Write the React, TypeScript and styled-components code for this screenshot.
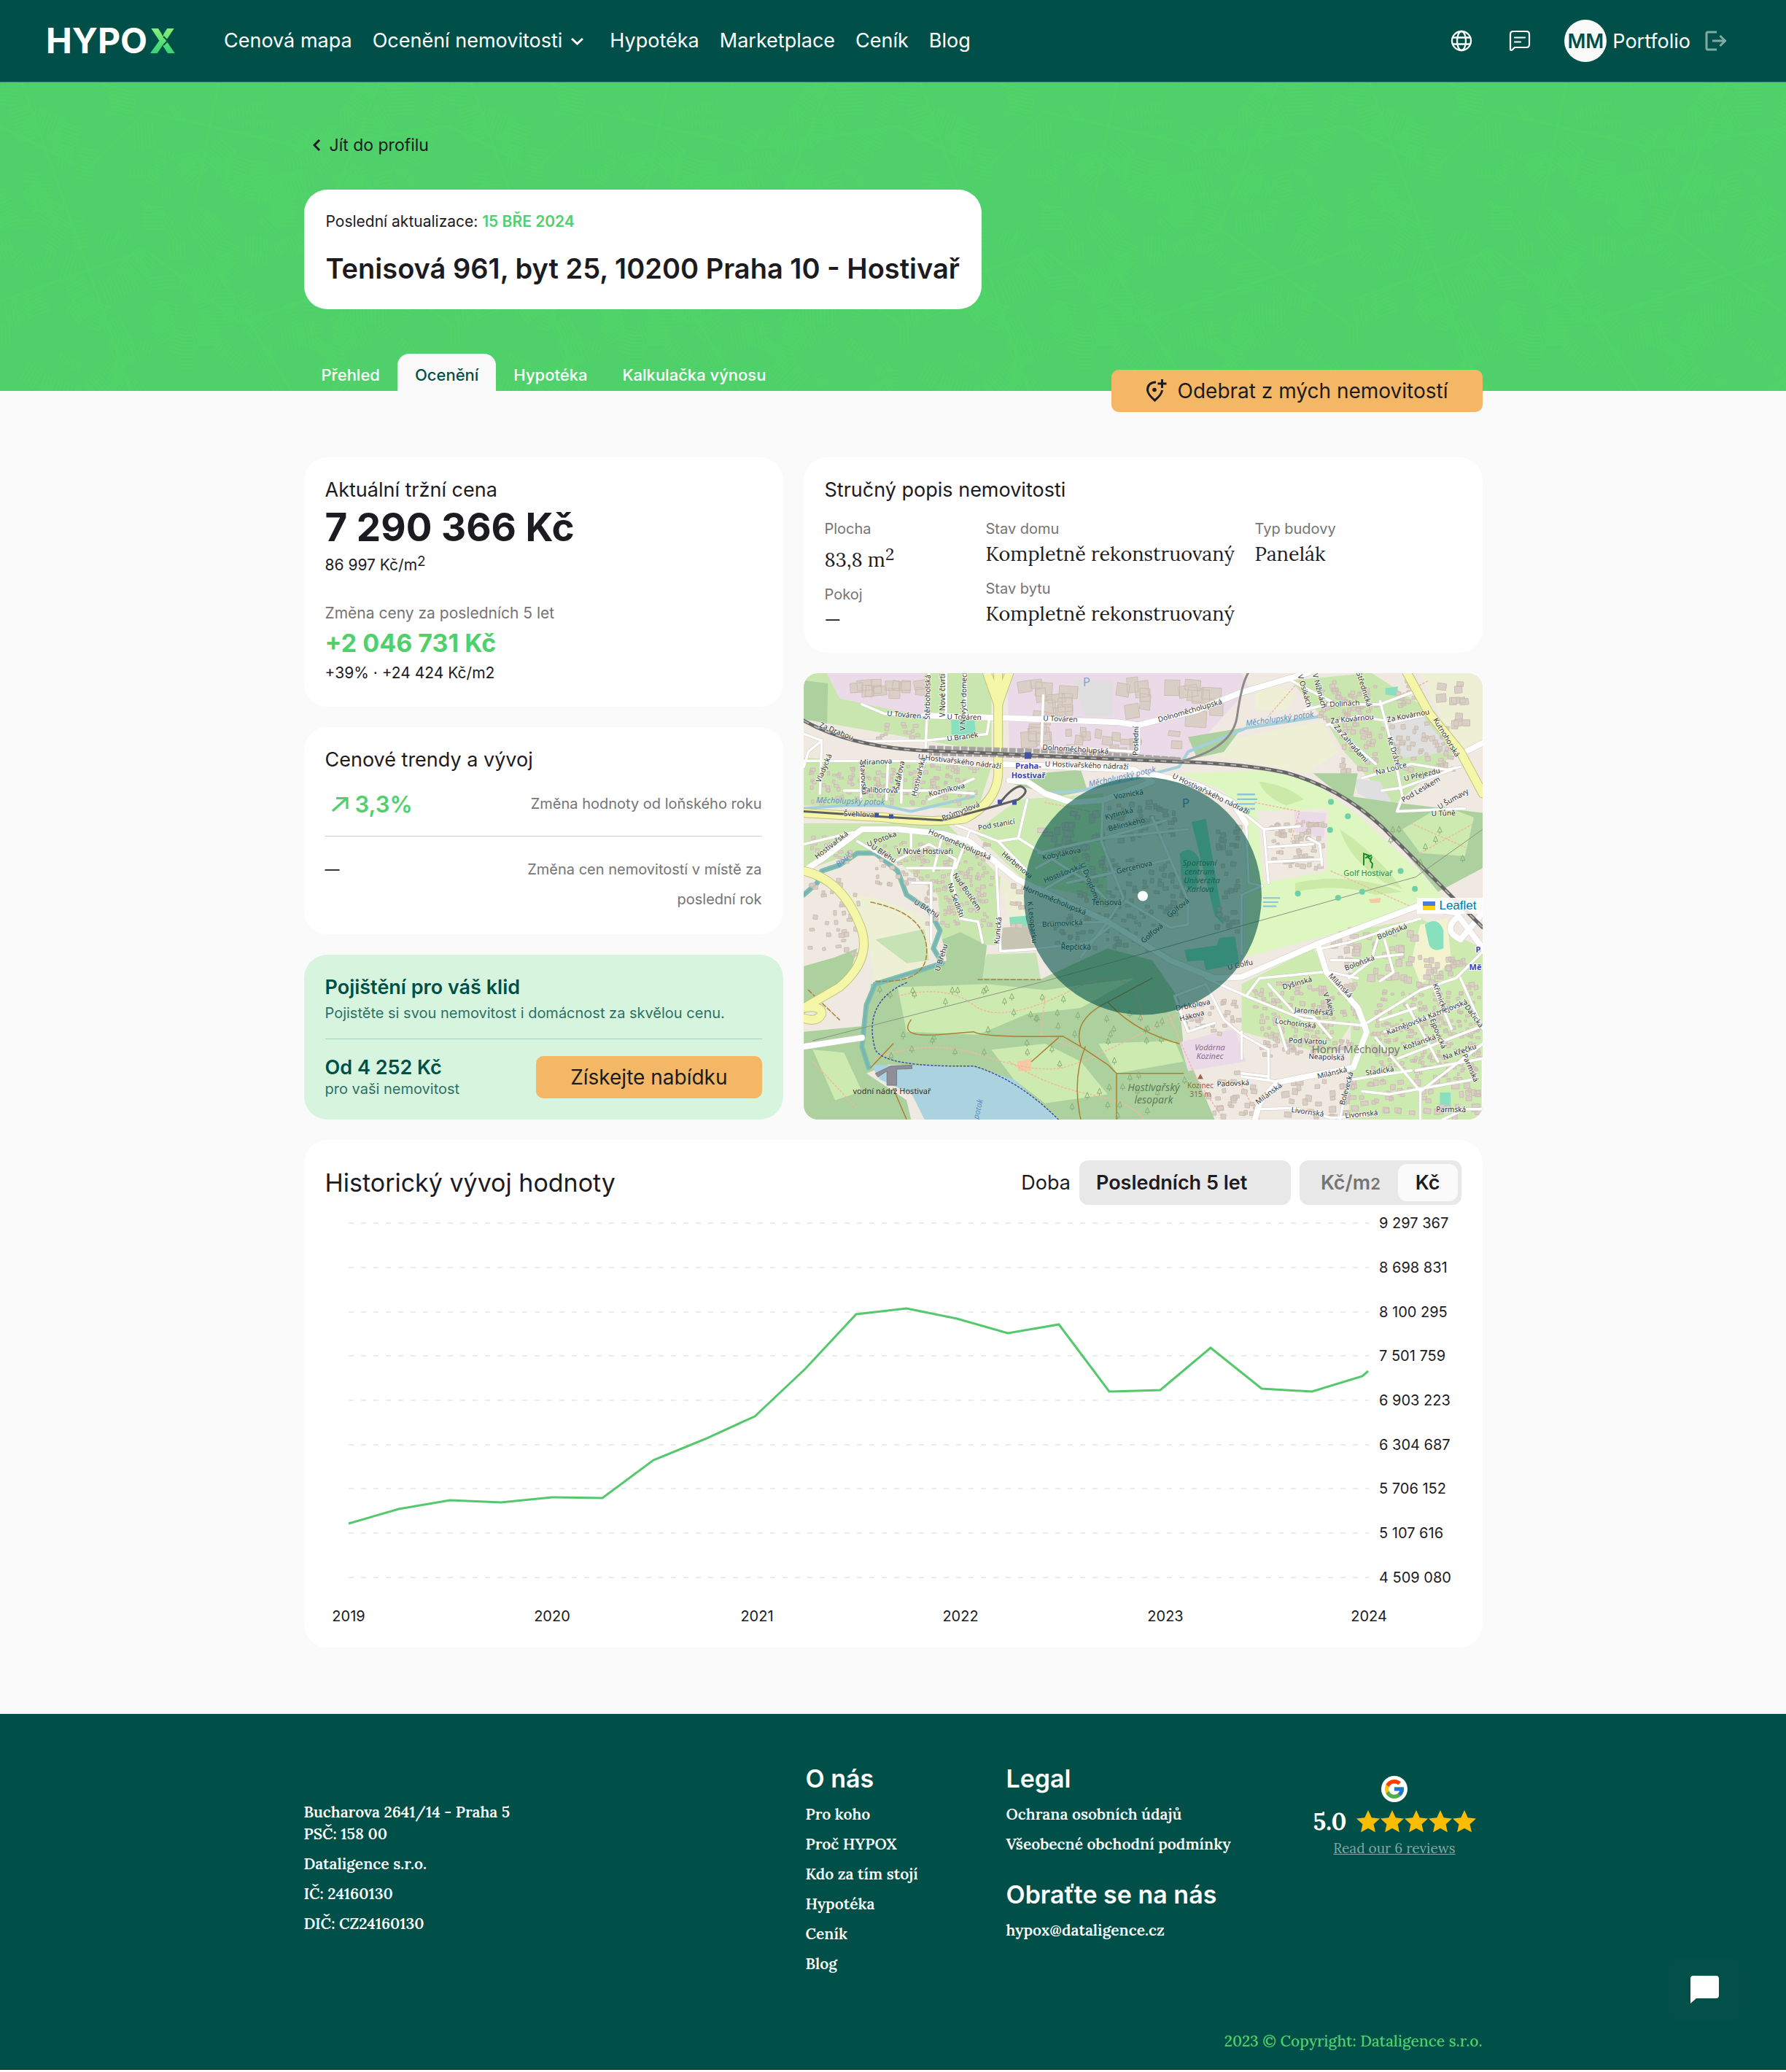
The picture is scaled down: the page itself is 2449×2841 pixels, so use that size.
import React, { useState } from "react";
import styled, { createGlobalStyle } from "styled-components";

const color = {
  pine: "#005049",
  leaf: "#50d06b",
  ink: "#1c1b1f",
  muted: "#757575",
  orange: "#f3b765",
  mint: "#d7f5de",
  page: "#fafafa",
  grey: "#e8e8e8",
};

const sans = `Inter, "Noto Sans", sans-serif`;
const serif = `Lora, "Liberation Serif", "Times New Roman", serif`;

const GlobalStyle = createGlobalStyle`
  *, *::before, *::after { box-sizing: border-box; }
  body { margin: 0; background: ${color.page}; color: ${color.ink}; font-family: ${sans}; font-size: 27px; }
  h1, h2, h3, p, ul, dl, dd { margin: 0; padding: 0; font-weight: 400; }
  ul { list-style: none; }
  a { color: inherit; text-decoration: none; }
  button, select { font: inherit; color: inherit; border: 0; background: none; padding: 0; cursor: pointer; }
  svg { display: block; }
`;

/* ---------- Header ---------- */

const Header = styled.header`
  display: flex;
  align-items: center;
  height: 113px;
  padding: 0 81px 0 62px;
  background: ${color.pine};
  border-bottom: 1px solid #3d8574;
  color: #fff;
`;

const Logo = styled.a`
  display: block;
  margin-right: 59px;
`;

const Nav = styled.nav`
  display: flex;
  gap: 28px;
  flex: 1;
`;

const NavLink = styled.a`
  display: flex;
  align-items: center;
  gap: 12px;
  line-height: 36px;
  white-space: nowrap;
  svg { margin-right: 8px; }
`;

const Tools = styled.div`
  display: flex;
  align-items: center;
`;

const IconButton = styled.button<{ $gap: number }>`
  display: block;
  margin-right: ${(p) => p.$gap}px;
`;

const Profile = styled.a`
  display: flex;
  align-items: center;
  gap: 8px;
  margin-right: 20px;
`;

const Avatar = styled.span`
  display: grid;
  place-items: center;
  width: 58px;
  height: 58px;
  border-radius: 50%;
  background: ${color.page};
  color: ${color.pine};
  font-weight: 600;
`;

/* ---------- Hero ---------- */

const Hero = styled.section`
  position: relative;
  background: ${color.leaf};
`;

const HeroTexture = styled.svg`
  position: absolute;
  inset: 0;
  width: 100%;
  height: 100%;
`;

const Container = styled.div`
  position: relative;
  max-width: 1616px;
  margin: 0 auto;
`;

const HeroInner = styled(Container)`
  padding-top: 70px;
`;

const BackLink = styled.a`
  display: flex;
  width: fit-content;
  align-items: center;
  gap: 12px;
  padding-left: 12px;
  font-size: 23px;
  line-height: 32px;
`;

const AddressCard = styled.div`
  width: fit-content;
  margin-top: 45px;
  padding: 24px 30px 26px;
  border-radius: 32px;
  background: #fff;
`;

const Updated = styled.p`
  font-size: 21px;
  line-height: 40px;
  strong { color: ${color.leaf}; font-weight: 600; }
`;

const Address = styled.h1`
  margin-top: 14px;
  font-size: 38px;
  font-weight: 600;
  line-height: 60px;
`;

const HeroFoot = styled.div`
  display: flex;
  align-items: flex-end;
  justify-content: space-between;
  margin-top: 61px;
`;

const Tabs = styled.nav`
  display: flex;
`;

const Tab = styled.a<{ $active?: boolean }>`
  padding: 11px 24px 0;
  height: 51px;
  border-radius: 16px 16px 0 0;
  background: ${(p) => (p.$active ? color.page : "transparent")};
  color: ${(p) => (p.$active ? color.pine : "#fff")};
  font-size: 22px;
  font-weight: 500;
  line-height: 36px;
`;

const OrangeButton = styled.button`
  display: flex;
  align-items: center;
  justify-content: center;
  gap: 15px;
  height: 58px;
  padding: 0 47px;
  border-radius: 10px;
  background: ${color.orange};
  color: ${color.ink};
  font-size: 28px;
`;

const RemoveButton = styled(OrangeButton)`
  margin-bottom: -29px;
`;

/* ---------- Cards ---------- */

const Main = styled.main`
  max-width: 1616px;
  margin: 0 auto;
  padding: 91px 0;
  display: grid;
  grid-template-columns: 657fr 931fr;
  gap: 28px;
`;

const Column = styled.div`
  display: flex;
  flex-direction: column;
  gap: 28px;
  min-width: 0;
`;

const Card = styled.section<{ $mint?: boolean }>`
  padding: 27px 29px;
  border-radius: 32px;
  background: ${(p) => (p.$mint ? color.mint : "#fff")};
  color: ${(p) => (p.$mint ? color.pine : color.ink)};
`;

const CardTitle = styled.h2<{ $bold?: boolean }>`
  font-size: 27px;
  font-weight: ${(p) => (p.$bold ? 600 : 400)};
  line-height: 36px;
`;

const Price = styled.p`
  font-size: 53px;
  font-weight: 700;
  line-height: 66px;
`;

const PriceNote = styled.p<{ $muted?: boolean }>`
  font-size: 21px;
  line-height: 38px;
  color: ${(p) => (p.$muted ? color.muted : "inherit")};
  sup { font-size: 19px; line-height: 0; vertical-align: 6px; }
`;

const Change = styled.div`
  margin-top: 28px;
`;

const ChangeValue = styled.p`
  font-size: 34px;
  font-weight: 700;
  line-height: 44px;
  color: ${color.leaf};
`;

const TrendRow = styled.div`
  display: flex;
  justify-content: space-between;
  padding: 22px 0 23px;
  line-height: 41px;
  & + & { border-top: 1px solid #c6d0cf; padding: 25px 0 0; }
`;

const TrendValue = styled.span<{ $up?: boolean }>`
  display: flex;
  align-items: center;
  gap: 8px;
  height: 41px;
  padding-left: ${(p) => (p.$up ? 8 : 0)}px;
  color: ${(p) => (p.$up ? color.leaf : color.ink)};
  font-size: ${(p) => (p.$up ? 31 : 20)}px;
  font-weight: ${(p) => (p.$up ? 600 : 400)};
`;

const TrendLabel = styled.span`
  max-width: 345px;
  color: ${color.muted};
  font-size: 20px;
  text-align: right;
`;

const OfferText = styled.p`
  font-size: 20px;
  line-height: 34px;
  opacity: 0.8;
`;

const Offer = styled.div`
  display: flex;
  justify-content: space-between;
  align-items: center;
  margin-top: 18px;
  padding: 23px 0 2px;
  border-top: 1px solid #a9cfc0;
`;

const OfferPrice = styled.p`
  font-weight: 600;
  line-height: 32px;
`;

const OfferNote = styled.p`
  font-size: 20px;
  line-height: 26px;
  opacity: 0.8;
`;

const Facts = styled.dl`
  display: grid;
  grid-template-columns: 198px 346px auto;
  justify-content: start;
  column-gap: 23px;
  margin-top: 20px;
`;

const FactColumn = styled.div`
  display: flex;
  flex-direction: column;
  gap: 14px;
`;

const FactName = styled.dt`
  color: ${color.muted};
  font-size: 20px;
  line-height: 30px;
`;

const FactValue = styled.dd<{ $raised?: boolean }>`
  padding-top: ${(p) => (p.$raised ? 8 : 0)}px;
  font-family: ${serif};
  font-size: 27px;
  line-height: 38px;
  white-space: nowrap;
  sup { font-size: 23px; line-height: 0; vertical-align: 9px; }
`;

const MapFrame = styled.div`
  position: relative;
  flex: 1;
  min-height: 560px;
  border-radius: 20px;
  overflow: hidden;
`;

const MapSvg = styled.svg`
  position: absolute;
  inset: 0;
  width: 100%;
  height: 100%;
`;

const Attribution = styled.a`
  position: absolute;
  right: 0;
  top: 308px;
  display: flex;
  align-items: center;
  gap: 5px;
  height: 22px;
  padding: 0 8px;
  background: rgba(255, 255, 255, 0.85);
  color: #0078a8;
  font-family: "Liberation Sans", Arial, sans-serif;
  font-size: 17px;
`;

/* ---------- Chart ---------- */

const ChartCard = styled(Card)`
  grid-column: 1 / -1;
  padding: 28px 29px;
`;

const ChartHead = styled.div`
  display: flex;
  align-items: center;
  gap: 12px;
`;

const ChartTitle = styled.h2`
  flex: 1;
  font-size: 34px;
`;

const Period = styled.select`
  appearance: none;
  width: 290px;
  height: 61px;
  padding: 0 23px;
  border-radius: 12px;
  background: ${color.grey};
  font-weight: 600;
`;

const Toggle = styled.div`
  display: flex;
  padding: 5px;
  border-radius: 12px;
  background: ${color.grey};
`;

const ToggleButton = styled.button<{ $active: boolean }>`
  height: 51px;
  padding: 0 24px;
  border-radius: 12px;
  background: ${(p) => (p.$active ? color.page : "transparent")};
  color: ${(p) => (p.$active ? color.ink : color.muted)};
  font-weight: 600;
  small { font-size: 22px; }
`;

const ChartSvg = styled.svg`
  width: 100%;
  height: auto;
  font-family: ${sans};
  font-size: 20px;
`;

/* ---------- Footer ---------- */

const Footer = styled.footer`
  padding: 67px 0 23px;
  border-bottom: 1px solid #10201e;
  background: ${color.pine};
  color: #fff;
  font-family: ${serif};
`;

const FooterGrid = styled(Container)`
  display: grid;
  grid-template-columns: 688fr 275fr 412fr 241fr;
`;

const FooterAddress = styled.address`
  padding-top: 53px;
  font-style: normal;
  font-size: 21px;
  font-weight: 600;
  line-height: 30px;
`;

const CompanyLine = styled.p`
  font-weight: 600;
  line-height: 41px;
  &:first-of-type { margin-top: 5px; }
`;

const FooterTitle = styled.h3<{ $spaced?: boolean }>`
  margin: ${(p) => (p.$spaced ? 27 : 0)}px 0 6px;
  font-family: ${sans};
  font-size: 34px;
  font-weight: 600;
  line-height: 44px;
`;

const FooterLink = styled.a`
  display: block;
  font-size: 21px;
  font-weight: 600;
  line-height: 41px;
  white-space: nowrap;
`;

const Reviews = styled.div`
  display: flex;
  flex-direction: column;
  align-items: center;
  padding-top: 18px;
`;

const Rating = styled.div`
  display: flex;
  align-items: center;
  gap: 13px;
  height: 44px;
  margin-top: 4px;
  font-size: 33px;
  font-weight: 700;
`;

const Stars = styled.span`
  display: flex;
  gap: 1px;
`;

const ReviewLink = styled.a`
  color: #80a8a4;
  font-size: 19px;
  line-height: 30px;
  text-decoration: underline;
`;

const Copyright = styled(Container)`
  margin-top: 71px;
  color: ${color.leaf};
  font-size: 21px;
  font-weight: 500;
  line-height: 30px;
  text-align: right;
`;

const ChatButton = styled.button`
  position: fixed;
  right: 64px;
  bottom: 68px;
  display: grid;
  place-items: center;
  width: 96px;
  height: 90px;
  border-radius: 16px;
  background: #03504a;
`;

/* ---------- Icons ---------- */

const LogoMark = () => (
  <svg width="186" height="60" viewBox="0 0 186 60" role="img" aria-label="HYPOX">
    <defs>
      <linearGradient id="logoX" x1="0" y1="0" x2="0" y2="1">
        <stop offset="0.200" stopColor="#8cee75" />
        <stop offset="0.800" stopColor="#38d477" />
      </linearGradient>
    </defs>
    <text x="1" y="47" fontFamily="Inter, sans-serif" fontSize="48" fontWeight="700" fill="#fff">HYPO</text>
    <text x="143" y="47" fontFamily="Inter, sans-serif" fontSize="47" fontWeight="800" fill="url(#logoX)">X</text>
    <path d="M162 24L168 30L162 36" fill="none" stroke={color.pine} strokeWidth="2" />
  </svg>
);

const Chevron = ({ left }: { left?: boolean }) => (
  <svg width={left ? 11 : 17} height={left ? 16 : 11} viewBox={left ? "0 0 11 16" : "0 0 17 11"} fill="none" stroke="currentColor" strokeWidth="3">
    <path d={left ? "M9 1 L2 8 L9 15" : "M1 2 L8.500 9 L16 2"} />
  </svg>
);

const GlobeIcon = () => (
  <svg width="30" height="30" viewBox="0 0 30 30" fill="none" stroke="#fff" strokeWidth="2.300">
    <circle cx="15" cy="15" r="13" />
    <ellipse cx="15" cy="15" rx="6" ry="13" />
    <path d="M3 10.500H27M3 19.500H27" />
  </svg>
);

const MessageIcon = () => (
  <svg width="30" height="30" viewBox="0 0 30 30" fill="none" stroke="#fff" strokeWidth="2.200" strokeLinejoin="round" strokeLinecap="round">
    <path d="M2 27V6Q2 2 6 2H24Q28 2 28 6V20Q28 24 24 24H8L5 27Q2.500 29 2 27Z" />
    <path d="M8 10.500H22M8 16.500H16" />
  </svg>
);

const LogoutIcon = () => (
  <svg width="30" height="28" viewBox="0 0 30 28" fill="none" stroke="#84aaa5" strokeWidth="3">
    <path d="M16 2H4Q2 2 2 4V24Q2 26 4 26H16" />
    <path d="M10 14H27M20.500 7L27.500 14L20.500 21" />
  </svg>
);

const PinPlusIcon = () => (
  <svg width="29" height="32" viewBox="0 0 29 32" fill="none" stroke={color.ink} strokeWidth="3">
    <path d="M14 4Q2.500 4.500 2.500 15Q3 21 12.500 29Q22 21 22.500 15" />
    <path d="M22.500 0V12M16.500 6H28.500" />
    <circle cx="12" cy="14.500" r="2.800" fill={color.ink} stroke="none" />
  </svg>
);

const ArrowUpRight = () => (
  <svg width="25" height="22" viewBox="0 0 25 22" fill="none" stroke="currentColor" strokeWidth="3.200">
    <path d="M2 20L21 3M7 2.500H22V17" />
  </svg>
);

const Star = () => (
  <svg width="32" height="31" viewBox="0 0 32 31" fill="#fbbc04">
    <path d="M16 0L20.700 10.300L32 11.600L23.600 19.200L25.900 30.300L16 24.700L6.100 30.300L8.400 19.200L0 11.600L11.300 10.300Z" />
  </svg>
);

const GoogleBadge = () => (
  <svg width="36" height="36" viewBox="0 0 36 36" role="img" aria-label="Google">
    <circle cx="18" cy="18" r="18" fill="#fff" />
    <g transform="translate(2.400 2.400) scale(.65)">
      <path fill="#FFC107" d="M43.600 20.100H42V20H24v8h11.300C33.700 32.700 29.200 36 24 36c-6.600 0-12-5.400-12-12s5.400-12 12-12c3.100 0 5.800 1.200 8 3l5.700-5.700C34 6.100 29.300 4 24 4 13 4 4 13 4 24s9 20 20 20 20-9 20-20c0-1.300-.1-2.700-.4-3.900z" />
      <path fill="#FF3D00" d="M6.300 14.700l6.600 4.800C14.700 15.100 19 12 24 12c3.100 0 5.800 1.200 8 3l5.700-5.700C34 6.100 29.300 4 24 4 16.300 4 9.700 8.300 6.300 14.700z" />
      <path fill="#4CAF50" d="M24 44c5.200 0 9.900-2 13.400-5.200l-6.200-5.200A12 12 0 0 1 24 36c-5.200 0-9.600-3.300-11.300-7.900l-6.500 5C9.500 39.600 16.200 44 24 44z" />
      <path fill="#1976D2" d="M43.600 20.100H42V20H24v8h11.300a12 12 0 0 1-4.100 5.600l6.200 5.200C37 39.200 44 34 44 24c0-1.300-.1-2.700-.4-3.900z" />
    </g>
  </svg>
);

/* ---------- Hero street texture ---------- */

const makeRandom = (seed: number) => () => {
  seed = (seed * 16807) % 2147483647;
  return seed / 2147483647;
};

const hatch = (() => {
  const rnd = makeRandom(11);
  let d = "";
  for (let i = 0; i < 170; i++) {
    const x = rnd() * 616;
    const y = rnd() * 423;
    const a = rnd() * Math.PI;
    const length = 8 + rnd() * 30;
    const count = 3 + Math.floor(rnd() * 9);
    for (let k = 0; k < count; k++) {
      const sx = x + Math.cos(a + 1.57) * k * 5;
      const sy = y + Math.sin(a + 1.57) * k * 5;
      d += `M${sx.toFixed(0)} ${sy.toFixed(0)}l${(Math.cos(a) * length).toFixed(0)} ${(Math.sin(a) * length).toFixed(0)}`;
    }
  }
  return d;
})();

const Texture = () => (
  <HeroTexture aria-hidden="true">
    <defs>
      <pattern id="streets" width="616" height="423" patternUnits="userSpaceOnUse">
        <g fill="none" stroke="#50d765" opacity="0.5">
          <path d={hatch} strokeWidth="2" />
          <path d="M0 60L120 120L200 40L420 90L616 60M30 0L180 423M300 0L260 200L400 423M520 0L440 200L616 330M0 300L200 230L330 330L616 230" strokeWidth="3" />
        </g>
      </pattern>
    </defs>
    <rect width="100%" height="100%" fill="url(#streets)" />
  </HeroTexture>
);

/* ---------- Map ---------- */

/* Survey grid to map pixels. */
const SX = 0.6125;
const SY = 0.4082;
const toMap = (x: number, y: number) => [x * SX - 12, y * SY - 14];

type Label = [string, number, number, number, number];

const streetLabels: Label[] = [
  ["U Továren", 212, 172, 276, 180], ["U Továren", 344, 183, 414, 185], ["U Továren", 558, 188, 630, 192],
  ["Dolnoměcholupská", 822, 190, 950, 134], ["Dolnoměcholupská", 568, 286, 688, 298], ["Poslední", 768, 294, 769, 218],
  ["V Dolinách", 1190, 142, 1258, 136], ["Za Kovárnou", 1208, 196, 1288, 184], ["Za Kovárnou", 1336, 190, 1412, 168],
  ["Kutnohorská", 1428, 184, 1480, 312], ["Ke Dráze", 1328, 256, 1344, 332], ["Za Zahradami", 1212, 220, 1270, 320],
  ["Na Louce", 1308, 368, 1364, 346], ["U Přejezdu", 1374, 388, 1436, 366], ["Pod Lesíkem", 1370, 456, 1438, 396],
  ["U Šumavy", 1450, 480, 1502, 436], ["U Tůně", 1430, 508, 1474, 506], ["V Osikách", 1128, 50, 1144, 130],
  ["V Nížinách", 1162, 50, 1176, 130], ["Střednická", 1262, 52, 1276, 118], ["Štěrboholská", 302, 158, 303, 60], ["V Nové čtvrti", 337, 150, 337, 56],
  ["V Nových domech", 382, 168, 384, 70], ["U Branek", 348, 256, 404, 244], ["Za Drahou", 60, 212, 122, 250],
  ["U Hostivařského nádraží", 294, 320, 442, 346], ["U Hostivařského nádraží", 578, 342, 728, 350],
  ["U Hostivařského nádraží", 862, 392, 994, 488], ["Miranova", 154, 336, 210, 332], ["Daliborova", 156, 428, 222, 430],
  ["Kozmíkova", 308, 440, 374, 416], ["Vladycká", 60, 386, 80, 314], ["Stavovská", 146, 336, 150, 426],
  ["Šafářova", 234, 412, 244, 336], ["Hostivařská", 274, 430, 290, 326], ["Průmyslová", 332, 524, 414, 476],
  ["Švehlova", 108, 508, 178, 512], ["Pod stanicí", 418, 554, 486, 536], ["U Potoka", 170, 608, 222, 578],
  ["Hornoměcholupská", 304, 570, 430, 652], ["Hornoměcholupská", 514, 758, 644, 838], ["Hostivařská", 56, 646, 114, 578],
  ["V Nové Hostivaři", 242, 636, 340, 636], ["U Břehu", 174, 620, 218, 662], ["U Břehu", 270, 806, 314, 846],
  ["U Břehu", 326, 1020, 340, 952], ["Herbenova", 468, 646, 520, 712], ["Kobylákova", 562, 654, 634, 632],
  ["Hostišovská", 568, 728, 636, 688], ["U Dvojdomů", 642, 682, 670, 788], ["Gercenova", 728, 700, 794, 676],
  ["Voznická", 720, 450, 776, 436], ["Kytinská", 702, 518, 752, 498], ["Bělinského", 712, 556, 776, 532],
  ["Tenisová", 670, 806, 726, 806], ["Golfová", 842, 846, 880, 800], ["Golfová", 784, 932, 822, 884],
  ["Brumovická", 562, 880, 636, 874], ["Řepčická", 602, 956, 656, 956], ["U Golfu", 974, 1024, 1022, 1008],
  ["K Lesoparku", 522, 812, 530, 920], ["Kunická", 458, 926, 462, 860], ["Na Sedlišti", 344, 748, 366, 838],
  ["Nad Botičem", 360, 722, 402, 812], ["Drbkolova", 862, 1160, 922, 1142], ["Hákova", 868, 1196, 912, 1178],
  ["Dyšinská", 1100, 1088, 1152, 1066], ["V Aleji", 1184, 1112, 1196, 1162], ["Jaroměřská", 1126, 1168, 1196, 1178],
  ["Lochotínská", 1084, 1206, 1156, 1220], ["Pod Vartou", 1114, 1270, 1182, 1274], ["Neapolská", 1158, 1324, 1222, 1328],
  ["Milánská", 1196, 1050, 1238, 1116], ["Milánská", 1174, 1390, 1234, 1368], ["Milánská", 1040, 1474, 1088, 1420],
  ["Stadická", 1284, 1378, 1336, 1366], ["Kaznějovská", 1336, 1238, 1406, 1198], ["Kaznějovská", 1428, 1184, 1498, 1144],
  ["Kožlanská", 1370, 1292, 1430, 1260], ["Ejpovická", 1424, 1202, 1446, 1282], ["Křimická", 1430, 1084, 1448, 1156],
  ["Dačická", 1502, 1156, 1530, 1214], ["Na Křečku", 1460, 1324, 1520, 1292], ["Parmská", 1496, 1320, 1518, 1394],
  ["Parmská", 1442, 1504, 1496, 1504], ["Boloňská", 1312, 920, 1366, 888], ["Boloňská", 1240, 1024, 1292, 994],
  ["Bolevecká", 1232, 1468, 1248, 1382], ["Padovská", 952, 1416, 1010, 1412], ["Livornská", 1118, 1504, 1176, 1516],
  ["Livornská", 1240, 1522, 1298, 1514],
];

const waterLabels: Label[] = [
  ["Měcholupský potok", 1018, 204, 1154, 176], ["Měcholupský potok", 666, 408, 802, 362],
  ["Měcholupský potok", 56, 464, 192, 470], ["Botič", 98, 680, 128, 642], ["potok", 412, 1520, 420, 1470],
];

const Labels = ({ items, ...style }: { items: Label[] } & React.SVGProps<SVGGElement>) => (
  <g {...style}>
    {items.map(([text, x1, y1, x2, y2], i) => {
      const [ax, ay] = toMap(x1, y1);
      const [bx, by] = toMap(x2, y2);
      const angle = (Math.atan2(by - ay, bx - ax) * 180) / Math.PI;
      return (
        <text key={i} transform={`translate(${(ax + bx) / 2} ${(ay + by) / 2 + 3}) rotate(${angle})`}>
          {text}
        </text>
      );
    })}
  </g>
);

const shapes: [string, string][] = [
  ["#c9e6ae", "M20 34H440V300L20 190Z"],
  ["#add19e", "M20 60L74 70L72 205L20 190Z"],
  ["#ebdbe8", "M70 34H290V178L160 140L100 120Z M475 34H1000L1018 90L990 130L870 330L480 292Z"],
  ["#e0dfdf", "M620 60H712V180H650Z"],
  ["#c9e6ae", "M20 320L440 350L410 490L20 480Z M20 540H340L460 720L450 950L330 940L320 780L240 680L150 630L20 700Z"],
  ["#eef0d5", "M1030 60L1120 100L1100 160L1030 160Z M960 262L1180 196L1215 300L1150 372L940 316Z M1400 34H1540V260L1480 300Z"],
  ["#add19e", "M880 250L1000 220L960 300L900 320Z M560 370L640 360L655 430L590 450L470 400Z"],
  ["#c9e6ae", "M1110 60L1290 34L1420 160L1480 300L1340 480L1230 300L1190 200Z"],
  ["#e0dfdf", "M1310 190L1400 170L1470 300L1360 320Z M1250 390L1310 400L1350 510L1260 440Z"],
  ["#add19e", "M1160 372L1260 372L1250 450L1340 470L1540 505L1540 690L1440 770L1340 590Z"],
  ["#cdebb0", "M1360 560L1450 480L1520 520L1500 650L1400 640Z"],
  ["#def6c0", "M860 372L1060 362L1160 402L1260 512L1390 690L1450 790L1390 830L1170 925L1010 990L1010 560L960 430Z"],
  ["#efe9e1", "M1035 500L1195 490L1190 700L1050 740Z"],
  ["#cdebb0", "M500 460L690 440L700 800L520 740L400 570Z M1000 1080L1160 960L1260 1180L1200 1320L1000 1240Z M1250 900L1400 860L1540 960V1535H1240Z"],
  ["#eef0d5", "M80 760L200 800L290 850L310 960L290 1020L180 1090L160 900Z M460 720L510 760L520 860L480 870Z"],
  ["#c5e3b4", "M180 930L290 895L300 1000L250 1010Z M430 980L540 975L550 1062L410 1062Z"],
  ["#add19e", "M20 1020L90 990L140 960L120 1060L20 1180Z M20 1240L160 1220L170 1080L250 1060L340 1000L330 930L370 905L430 950L420 1060L550 1064L700 960L800 1000L860 1130L870 1290L940 1535H590L500 1430L410 1370L210 1350L160 1380L250 1470L260 1535H20Z"],
  ["#cdebb0", "M230 1090L430 1080L560 1100L760 1060L640 1160L520 1180L410 1250L250 1240Z M440 1300L560 1280L640 1340L700 1450L560 1480L490 1400Z M40 1300L110 1310L150 1440L90 1470Z M680 1280L850 1270L870 1340L720 1380Z"],
  ["#aad3df", "M200 1352L400 1358L490 1400L590 1535H290L262 1450L190 1400L170 1350Z"],
  ["#ebdbe8", "M862 1275L985 1228L1010 1340L880 1372Z M1118 500L1190 505L1184 590L1120 570Z"],
  ["#c8c4b3", "M465 890L530 885L540 960L460 970Z"],
  ["#f3f4cf", "M1400 880L1460 860L1470 1010L1400 1080L1380 1000Z"],
  ["#f5c9a1", "M498 1340L530 1330L528 1372L500 1372Z M1285 795L1312 790L1310 806L1288 808Z"],
  ["#88e0be", "M350 192L402 190L405 242L350 242Z M480 855L520 850L520 886L482 886Z M1410 880Q1440 850 1452 900V960Q1430 975 1420 950Z M888 535L920 525L960 880L940 850Z M862 640Q890 610 905 660L900 760Q870 770 865 720Z M872 965L945 950L950 925L985 920L995 1012L920 1034L915 1000L878 1004Z M1322 86L1350 80L1348 112L1322 108Z M1444 1444H1468V1490H1444Z"],
];

const creek = "M20 780L50 740L60 700L100 680L140 640L180 640L230 700L250 780L300 830L325 900L310 960L330 1010L180 1080L160 1150L150 1290L165 1360";
const brook = "M20 490L110 480L200 480L260 500L400 450M560 440L640 430L760 390L860 350L880 300L1010 220L1180 180";

const minorRoads = [
  "M150 140L200 172L292 178M300 34L292 300M338 34V176M382 34V178M130 265L292 262L430 240L436 180M556 110L552 280L770 300V215",
  "M20 240L60 262L30 300L20 350M60 260L56 440M148 340V460M208 340L205 460M240 340L238 470M290 330L270 440M20 330H290L440 350M110 430H300L400 440M300 460L400 390",
  "M520 460L500 590L455 600M500 590L660 740M660 740L700 800M360 545L455 600L520 700M545 640L630 610L690 590L880 560M690 590L830 530M610 740L700 710L840 660M540 690L600 640M560 760L640 690L660 740M800 520L880 800L880 880L840 890L740 800",
  "M690 460L686 600L735 790L700 870M545 880L700 870L640 990M545 960L660 940L710 880M20 610L130 570M140 600L220 670L300 610L360 660L350 720L370 860L410 870L420 940M260 560V640M330 580L310 700M250 690L350 690M262 740H305V940M390 570L360 690",
  "M450 660L460 970L540 962M1000 500L1050 560L1060 740M1050 560L1130 550M1060 620L1160 610M1060 670L1180 660M1150 590L1175 610L1180 680M1010 540L1016 740L1046 750L1000 780L1000 980",
  "M920 1080L960 1200L1000 1250L1060 1300V1400M920 1080L850 1120L880 1240L940 1210M920 1060L1010 1120L1140 1200L1280 1220M1000 1240V1330M1010 1120L1040 1060L1180 1040M1060 1080L1120 1180L1160 1190L1200 1260M1080 1200L1100 1300",
  "M1140 160L1190 140L1310 140L1400 90M1310 130L1340 300L1360 450L1348 500L1500 490M1190 210L1260 180L1340 200L1430 170M1200 210L1300 340M1270 388L1380 340L1460 360L1490 350M1314 430L1360 420L1470 360M1110 60L1200 130",
  "M1200 1000L1290 1000L1310 900L1400 860M1240 1060L1300 990L1360 980M1180 960L1240 940L1320 900M1200 1040L1260 1060M1320 930L1340 1040L1310 1070M1270 1220L1400 1100L1480 1060L1540 970M1300 1260L1400 1440L1540 1280M1320 1240L1500 1150M1370 1150L1440 1340M1430 1090L1470 1230M1490 1060L1540 1230M1350 1330L1540 1220M1390 1370L1540 1330L1540 1500M1250 1400L1380 1370M1270 1440L1330 1450L1520 1400M1400 1430V1535M1450 1535L1500 1500H1540M1240 1390L1220 1535M1040 1500L1120 1496L1200 1530L1300 1520M1090 1410L1000 1390M1390 1160L1310 1200M1000 1380L1060 1390",
];

const mainRoads = [
  "M290 178L480 186L720 200L770 210L900 160L1000 100L1150 34",
  "M480 396L520 400L560 440L620 470L690 462M690 462L800 400L760 360L440 340M800 375L900 410L980 470L1010 540",
  "M20 700L60 660L150 560L230 560L330 575L390 600L500 730L700 870L840 1000L940 1060L1000 1056L1170 945L1390 820L1480 840L1540 960",
  "M1170 945L1190 1040L1260 1160L1280 1240L1250 1360L1080 1410L1040 1480L1030 1535",
  "M1500 300L1540 270",
  "M20 1290L150 1260M1480 860Q1450 900 1490 930L1540 840",
];

const yellowRoads = [
  "M455 34V380Q450 470 380 525Q300 540 200 520L20 505",
  "M1370 34L1420 170L1490 300L1540 440",
  "M20 700Q110 730 150 900Q170 1000 100 1090L20 1160",
  "M20 1160Q60 1150 60 1180Q50 1210 20 1195",
  "M430 34L455 140L480 34",
];

const trails = "M170 1360L220 1280M260 1200Q230 1260 320 1250L400 1240Q420 1260 600 1255L640 1290L700 1350L720 1380H870M640 1290Q620 1200 700 1140L800 1060M700 1140Q760 1240 860 1280M530 1340L590 1260M650 1290Q620 1400 640 1535M720 1380V1535M220 1430L250 1535";
const paths = "M180 1330Q300 1260 420 1320T600 1360T860 1180M230 1120Q340 1080 400 1150T620 1100T780 1240M560 1120L550 1250L640 1300M40 1340L140 1500M480 1340Q560 1420 660 1450T780 1535M830 1160L900 1400L960 1535M1030 470L1130 500L1110 600M1200 700L1380 820M1000 1420L1040 1535M560 470L660 500M1130 60L1060 180M1340 120L1420 60M1380 540L1500 620M1400 640L1520 540";

const buildings = (() => {
  const rnd = makeRandom(5);
  const zones: [number, number, number, number, number, number][] = [
    [110, 50, 280, 90, 14, 24], [490, 50, 600, 170, 14, 30], [720, 50, 930, 170, 14, 34], [490, 200, 540, 260, 5, 36],
    [600, 210, 860, 290, 18, 18], [180, 190, 280, 255, 14, 8], [30, 340, 410, 470, 130, 7], [30, 580, 120, 670, 22, 7],
    [170, 600, 440, 740, 110, 7], [290, 740, 440, 880, 60, 7], [30, 720, 140, 980, 34, 9], [540, 480, 680, 620, 22, 16],
    [600, 640, 870, 850, 90, 9], [700, 460, 850, 600, 44, 10], [560, 840, 800, 960, 54, 8], [1060, 530, 1180, 690, 60, 9],
    [1170, 60, 1300, 190, 60, 8], [1220, 200, 1480, 360, 90, 9], [1340, 40, 1400, 140, 16, 8], [1430, 60, 1520, 220, 12, 16],
    [1020, 1070, 1260, 1320, 150, 8], [1290, 1090, 1530, 1400, 240, 7], [1200, 890, 1380, 1060, 40, 13],
    [1380, 980, 1530, 1090, 30, 11], [1080, 1400, 1530, 1520, 84, 12], [870, 1130, 990, 1240, 30, 8], [920, 1370, 1040, 1520, 26, 10],
    [940, 500, 990, 900, 34, 10], [480, 740, 520, 880, 8, 11],
  ];
  let d = "";
  zones.forEach(([x1, y1, x2, y2, n, size]) => {
    for (let i = 0; i < n; i++) {
      const w = size * (0.6 + rnd() * 0.8);
      const h = size * (0.9 + rnd() * 0.9);
      const skew = (rnd() - 0.5) * size * 0.5;
      d += `M${(x1 + rnd() * (x2 - x1)).toFixed(0)} ${(y1 + rnd() * (y2 - y1)).toFixed(0)}l${w.toFixed(0)} ${skew.toFixed(0)}l${(-skew / 2).toFixed(0)} ${h.toFixed(0)}l${(-w).toFixed(0)} ${(-skew).toFixed(0)}Z`;
    }
  });
  return d;
})();

const trees = (() => {
  const rnd = makeRandom(23);
  const out: [number, number][] = [];
  for (let i = 0; i < 46; i++) out.push([190 + rnd() * 640, 1080 + rnd() * 260]);
  for (let i = 0; i < 14; i++) out.push([600 + rnd() * 280, 1360 + rnd() * 150]);
  for (let i = 0; i < 8; i++) out.push([1320 + rnd() * 200, 500 + rnd() * 160]);
  return out;
})();

const rail = "M20 195Q120 280 280 295Q450 305 620 318L860 333Q1010 340 1100 370Q1240 430 1340 590L1480 800L1540 890";

const AreaMap = () => (
  <MapSvg viewBox="0 0 931 613" preserveAspectRatio="xMidYMid slice" role="img" aria-label="Praha-Hostivař">
    <rect width="931" height="613" fill="#efe9e1" />
    <g transform={`translate(-12 -14) scale(${SX} ${SY})`} strokeLinejoin="round" strokeLinecap="round">
      {shapes.map(([fill, d], i) => <path key={i} d={d} fill={fill} />)}
      <g fill="#cbeaa8">
        <path d="M1040 400Q1100 410 1140 460L1100 480Q1050 450 1040 400ZM1220 560Q1300 640 1360 760L1320 740Q1240 660 1220 560ZM1120 740Q1240 700 1360 770L1300 780Q1220 740 1120 770Z" />
      </g>
      <g fill="none">
        <path d={creek} stroke="#7fc0a9" strokeWidth="7" vectorEffect="non-scaling-stroke" />
        <path d={creek} stroke="#79b3ba" strokeWidth="3" vectorEffect="non-scaling-stroke" />
        <path d={brook} stroke="#a4d0dc" strokeWidth="4" vectorEffect="non-scaling-stroke" />
        <path d={paths} stroke="#f3b5a5" strokeWidth="1.500" strokeDasharray="2 3" vectorEffect="non-scaling-stroke" />
        <path d={trails} stroke="#ad7f2f" strokeWidth="1.500" vectorEffect="non-scaling-stroke" />
        <path d="M170 805Q290 840 295 960T180 1070M30 1100L100 1200M410 1065H550" stroke="#ad7f2f" strokeWidth="1.500" strokeDasharray="6 3" vectorEffect="non-scaling-stroke" />
        <path d="M250 1075Q150 1140 180 1300Q200 1360 400 1355Q500 1400 590 1535" stroke="#3b4ca8" strokeWidth="1.500" strokeDasharray="2 3" vectorEffect="non-scaling-stroke" />
      </g>
      <path d={buildings} fill="#d9cfc6" stroke="#cbbdb1" strokeWidth="1" vectorEffect="non-scaling-stroke" />
      <g fill="none" stroke="#cfc9c2">
        {minorRoads.map((d, i) => <path key={i} d={d} strokeWidth="4.500" vectorEffect="non-scaling-stroke" />)}
        {mainRoads.map((d, i) => <path key={i} d={d} strokeWidth="9" vectorEffect="non-scaling-stroke" />)}
      </g>
      <g fill="none" stroke="#fff">
        {minorRoads.map((d, i) => <path key={i} d={d} strokeWidth="3.500" vectorEffect="non-scaling-stroke" />)}
        {mainRoads.map((d, i) => <path key={i} d={d} strokeWidth="8" vectorEffect="non-scaling-stroke" />)}
      </g>
      <g fill="none">
        {yellowRoads.map((d, i) => <path key={i} d={d} stroke="#c0c37c" strokeWidth="13" vectorEffect="non-scaling-stroke" />)}
        {yellowRoads.map((d, i) => <path key={i} d={d} stroke="#f5f6a8" strokeWidth="11" vectorEffect="non-scaling-stroke" />)}
        <path d="M20 500L200 518L330 530L430 490L500 460Q530 430 505 415Q485 420 460 470" stroke="#5f5f5f" strokeWidth="3" vectorEffect="non-scaling-stroke" />
        <path d="M300 286L620 300L860 325L640 318L300 305" stroke="#a9a5a2" strokeWidth="6" strokeDasharray="9 2" strokeLinecap="butt" vectorEffect="non-scaling-stroke" />
        <path d={rail} stroke="#666" strokeWidth="5" vectorEffect="non-scaling-stroke" />
        <path d={rail} stroke="#b8b4b0" strokeWidth="2" strokeDasharray="8 8" strokeLinecap="butt" vectorEffect="non-scaling-stroke" />
        <path d="M860 333Q980 290 990 180T1015 34" stroke="#8d8a88" strokeWidth="3" vectorEffect="non-scaling-stroke" />
        <path d="M40 1270L560 1070L1010 880L1390 720L1540 560" stroke="#8b9385" strokeWidth="1" vectorEffect="non-scaling-stroke" />
      </g>
      <path d="M180 1380L215 1355L262 1352L262 1364L228 1366V1420H206V1372L186 1392Z" fill="#8e8e98" stroke="#555" />
      <path d="M990 440H1030V446H990ZM990 456H1035V462H990ZM990 472H1030V478H990ZM990 488H1030V494H990ZM1048 788H1086V793H1048ZM1048 802H1082V807H1048ZM1048 816H1078V821H1048Z" fill="#8cc4dd" />
    </g>
    <g fill="none" stroke="#86ad77">
      {trees.map(([x, y], i) => {
        const [mx, my] = toMap(x, y);
        return <path key={i} d={`M${mx} ${my}l-3 7h6zM${mx} ${my + 7}v3`} />;
      })}
    </g>
    <g fill="#6fd0a8">
      {[[1200, 468], [1238, 516], [1198, 562], [1216, 790], [1270, 770], [1126, 776], [1356, 700], [1388, 760], [1012, 500]].map(([x, y], i) => {
        const [mx, my] = toMap(x, y);
        return <circle key={i} cx={mx} cy={my} r="4" />;
      })}
    </g>
    <g fill="#4052a8">
      <rect x="303" y="109" width="9" height="9" />
      <rect x="97" y="192" width="6" height="6" />
      <rect x="117" y="194" width="6" height="6" />
      <rect x="266" y="174" width="6" height="6" />
      <rect x="286" y="175" width="6" height="6" />
    </g>
    <g fontFamily='"Noto Sans", sans-serif' fontSize="10" textAnchor="middle">
      <Labels items={streetLabels} fill="#333" stroke="#fff" strokeWidth="2" strokeOpacity="0.6" paintOrder="stroke" />
      <Labels items={waterLabels} fill="#5b8fc4" fontStyle="italic" fontSize="11" />
      <g fill="#3a3fb5" fontWeight="700" fontSize="11" stroke="#fff" strokeWidth="2" paintOrder="stroke">
        <text x="308" y="131">Praha-</text>
        <text x="308" y="144">Hostivař</text>
        <text x="925" y="383">P</text>
        <text x="921" y="407">Mě</text>
      </g>
      <g fill="#2d8a4a" fontSize="11">
        <text x="774" y="278">Golf Hostivař</text>
      </g>
      <g fontStyle="italic" fill="#3f7d5c" fontSize="11">
        <text x="543" y="264">Sportovní</text>
        <text x="543" y="276">centrum</text>
        <text x="546" y="288">Univerzita</text>
        <text x="544" y="300">Karlova</text>
      </g>
      <g fontStyle="italic" fill="#8c6a8c" fontSize="11">
        <text x="557" y="517">Vodárna</text>
        <text x="557" y="529">Kozinec</text>
      </g>
      <g fontStyle="italic" fill="#5a7d55" fontSize="14">
        <text x="480" y="573">Hostivařský</text>
        <text x="480" y="590">lesopark</text>
      </g>
      <g fill="#a0603c" fontSize="10">
        <text x="544" y="569">Kozinec</text>
        <text x="544" y="581">315 m</text>
        <path d="M544 550l-4 7h8z" />
      </g>
      <text x="757" y="521" fontSize="15" fill="#777">Horní Měcholupy</text>
      <text x="121" y="577" fontSize="11" fill="#333">vodní nádrž Hostivař</text>
      <g fill="#2f86d0" fontSize="17">
        <text x="388" y="18" opacity="0.6">P</text>
        <text x="524" y="184">P</text>
      </g>
    </g>
    <path d="M768 264V248l8 3-6 3M779 252l-2 6 3 4-1 6M778 257l-4-4 5-3" fill="none" stroke="#1b8a2a" strokeWidth="2" />
    <circle cx="465" cy="306" r="163" fill={color.pine} fillOpacity="0.6" />
    <circle cx="465" cy="306" r="7" fill="#fff" />
  </MapSvg>
);

/* ---------- Chart ---------- */

const axis = [
  { y: 25, text: "9 297 367" }, { y: 86, text: "8 698 831" }, { y: 147, text: "8 100 295" },
  { y: 207, text: "7 501 759" }, { y: 268, text: "6 903 223" }, { y: 329, text: "6 304 687" },
  { y: 389, text: "5 706 152" }, { y: 450, text: "5 107 616" }, { y: 511, text: "4 509 080" },
];

const years = [
  { x: 32, text: "2019" }, { x: 311, text: "2020" }, { x: 592, text: "2021" },
  { x: 871, text: "2022" }, { x: 1152, text: "2023" }, { x: 1431, text: "2024" },
];

const series = [
  [32, 437], [101, 417], [171, 405], [241, 408], [311, 401], [380, 402], [450, 350], [521, 321], [589, 290],
  [658, 225], [728, 150], [797, 142], [866, 156], [936, 176], [1006, 164], [1075, 256], [1145, 254], [1214, 196],
  [1284, 252], [1353, 256], [1422, 235], [1430, 228],
];

const HistoryChart = () => (
  <ChartSvg viewBox="0 0 1558 579" role="img" aria-label="Historický vývoj hodnoty">
    {axis.map((row) => (
      <g key={row.text}>
        <line x1="32" x2="1431" y1={row.y} y2={row.y} stroke="#ebebeb" strokeWidth="2" strokeDasharray="7 10" />
        <text x="1445" y={row.y + 7} fill={color.ink}>{row.text}</text>
      </g>
    ))}
    {years.map((year) => (
      <text key={year.text} x={year.x} y="571" textAnchor="middle" fill={color.ink}>{year.text}</text>
    ))}
    <polyline points={series.map((p) => p.join(",")).join(" ")} fill="none" stroke="#54c86c" strokeWidth="3" />
  </ChartSvg>
);

/* ---------- Page ---------- */

export default function App() {
  const [unit, setUnit] = useState<"m2" | "total">("total");

  return (
    <>
      <GlobalStyle />
      <Header>
        <Logo href="#"><LogoMark /></Logo>
        <Nav>
          <NavLink href="#">Cenová mapa</NavLink>
          <NavLink href="#">Ocenění nemovitosti <Chevron /></NavLink>
          <NavLink href="#">Hypotéka</NavLink>
          <NavLink href="#">Marketplace</NavLink>
          <NavLink href="#">Ceník</NavLink>
          <NavLink href="#">Blog</NavLink>
        </Nav>
        <Tools>
          <IconButton $gap={50} aria-label="Jazyk"><GlobeIcon /></IconButton>
          <IconButton $gap={46} aria-label="Zprávy"><MessageIcon /></IconButton>
          <Profile href="#"><Avatar>MM</Avatar>Portfolio</Profile>
          <IconButton $gap={0} aria-label="Odhlásit"><LogoutIcon /></IconButton>
        </Tools>
      </Header>

      <Hero>
        <Texture />
        <HeroInner>
          <BackLink href="#"><Chevron left />Jít do profilu</BackLink>
          <AddressCard>
            <Updated>Poslední aktualizace: <strong>15 BŘE 2024</strong></Updated>
            <Address>Tenisová 961, byt 25, 10200 Praha 10 - Hostivař</Address>
          </AddressCard>
          <HeroFoot>
            <Tabs>
              <Tab href="#">Přehled</Tab>
              <Tab href="#" $active aria-current="page">Ocenění</Tab>
              <Tab href="#">Hypotéka</Tab>
              <Tab href="#">Kalkulačka výnosu</Tab>
            </Tabs>
            <RemoveButton><PinPlusIcon />Odebrat z mých nemovitostí</RemoveButton>
          </HeroFoot>
        </HeroInner>
      </Hero>

      <Main>
        <Column>
          <Card>
            <CardTitle>Aktuální tržní cena</CardTitle>
            <Price>7 290 366 Kč</Price>
            <PriceNote>86 997 Kč/m<sup>2</sup></PriceNote>
            <Change>
              <PriceNote $muted>Změna ceny za posledních 5 let</PriceNote>
              <ChangeValue>+2 046 731 Kč</ChangeValue>
              <PriceNote>+39% · +24 424 Kč/m2</PriceNote>
            </Change>
          </Card>
          <Card>
            <CardTitle>Cenové trendy a vývoj</CardTitle>
            <TrendRow>
              <TrendValue $up><ArrowUpRight />3,3%</TrendValue>
              <TrendLabel>Změna hodnoty od loňského roku</TrendLabel>
            </TrendRow>
            <TrendRow>
              <TrendValue>—</TrendValue>
              <TrendLabel>Změna cen nemovitostí v místě za poslední rok</TrendLabel>
            </TrendRow>
          </Card>
          <Card $mint>
            <CardTitle $bold>Pojištění pro váš klid</CardTitle>
            <OfferText>Pojistěte si svou nemovitost i domácnost za skvělou cenu.</OfferText>
            <Offer>
              <div>
                <OfferPrice>Od 4 252 Kč</OfferPrice>
                <OfferNote>pro vaši nemovitost</OfferNote>
              </div>
              <OrangeButton>Získejte nabídku</OrangeButton>
            </Offer>
          </Card>
        </Column>

        <Column>
          <Card>
            <CardTitle>Stručný popis nemovitosti</CardTitle>
            <Facts>
              <FactColumn>
                <div>
                  <FactName>Plocha</FactName>
                  <FactValue $raised>83,8 m<sup>2</sup></FactValue>
                </div>
                <div>
                  <FactName>Pokoj</FactName>
                  <FactValue>—</FactValue>
                </div>
              </FactColumn>
              <FactColumn>
                <div>
                  <FactName>Stav domu</FactName>
                  <FactValue>Kompletně rekonstruovaný</FactValue>
                </div>
                <div>
                  <FactName>Stav bytu</FactName>
                  <FactValue>Kompletně rekonstruovaný</FactValue>
                </div>
              </FactColumn>
              <FactColumn>
                <div>
                  <FactName>Typ budovy</FactName>
                  <FactValue>Panelák</FactValue>
                </div>
              </FactColumn>
            </Facts>
          </Card>
          <MapFrame>
            <AreaMap />
            <Attribution href="#">
              <svg width="17" height="12" viewBox="0 0 17 12" aria-hidden="true">
                <rect width="17" height="6" fill="#4c7be1" />
                <rect y="6" width="17" height="6" fill="#ffd500" />
              </svg>
              Leaflet
            </Attribution>
          </MapFrame>
        </Column>

        <ChartCard>
          <ChartHead>
            <ChartTitle>Historický vývoj hodnoty</ChartTitle>
            <label htmlFor="period">Doba</label>
            <Period id="period" defaultValue="5">
              <option value="5">Posledních 5 let</option>
            </Period>
            <Toggle>
              <ToggleButton $active={unit === "m2"} aria-pressed={unit === "m2"} onClick={() => setUnit("m2")}>
                Kč/m<small>2</small>
              </ToggleButton>
              <ToggleButton $active={unit === "total"} aria-pressed={unit === "total"} onClick={() => setUnit("total")}>
                Kč
              </ToggleButton>
            </Toggle>
          </ChartHead>
          <HistoryChart />
        </ChartCard>
      </Main>

      <Footer>
        <FooterGrid>
          <FooterAddress>
            Bucharova 2641/14 - Praha 5<br />PSČ: 158 00
            <CompanyLine>Dataligence s.r.o.</CompanyLine>
            <CompanyLine>IČ: 24160130</CompanyLine>
            <CompanyLine>DIČ: CZ24160130</CompanyLine>
          </FooterAddress>
          <div>
            <FooterTitle>O nás</FooterTitle>
            <FooterLink href="#">Pro koho</FooterLink>
            <FooterLink href="#">Proč HYPOX</FooterLink>
            <FooterLink href="#">Kdo za tím stojí</FooterLink>
            <FooterLink href="#">Hypotéka</FooterLink>
            <FooterLink href="#">Ceník</FooterLink>
            <FooterLink href="#">Blog</FooterLink>
          </div>
          <div>
            <FooterTitle>Legal</FooterTitle>
            <FooterLink href="#">Ochrana osobních údajů</FooterLink>
            <FooterLink href="#">Všeobecné obchodní podmínky</FooterLink>
            <FooterTitle $spaced>Obraťte se na nás</FooterTitle>
            <FooterLink href="#">hypox@dataligence.cz</FooterLink>
          </div>
          <Reviews>
            <GoogleBadge />
            <Rating>
              5.0
              <Stars aria-label="5 z 5">
                <Star /><Star /><Star /><Star /><Star />
              </Stars>
            </Rating>
            <ReviewLink href="#">Read our 6 reviews</ReviewLink>
          </Reviews>
        </FooterGrid>
        <Copyright>2023 © Copyright: Dataligence s.r.o.</Copyright>
      </Footer>

      <ChatButton aria-label="Chat">
        <svg width="39" height="38" viewBox="0 0 39 38" fill="#fff">
          <path d="M4 0H35Q39 0 39 4V27Q39 31 35 31H8L0 38V4Q0 0 4 0Z" />
        </svg>
      </ChatButton>
    </>
  );
}
